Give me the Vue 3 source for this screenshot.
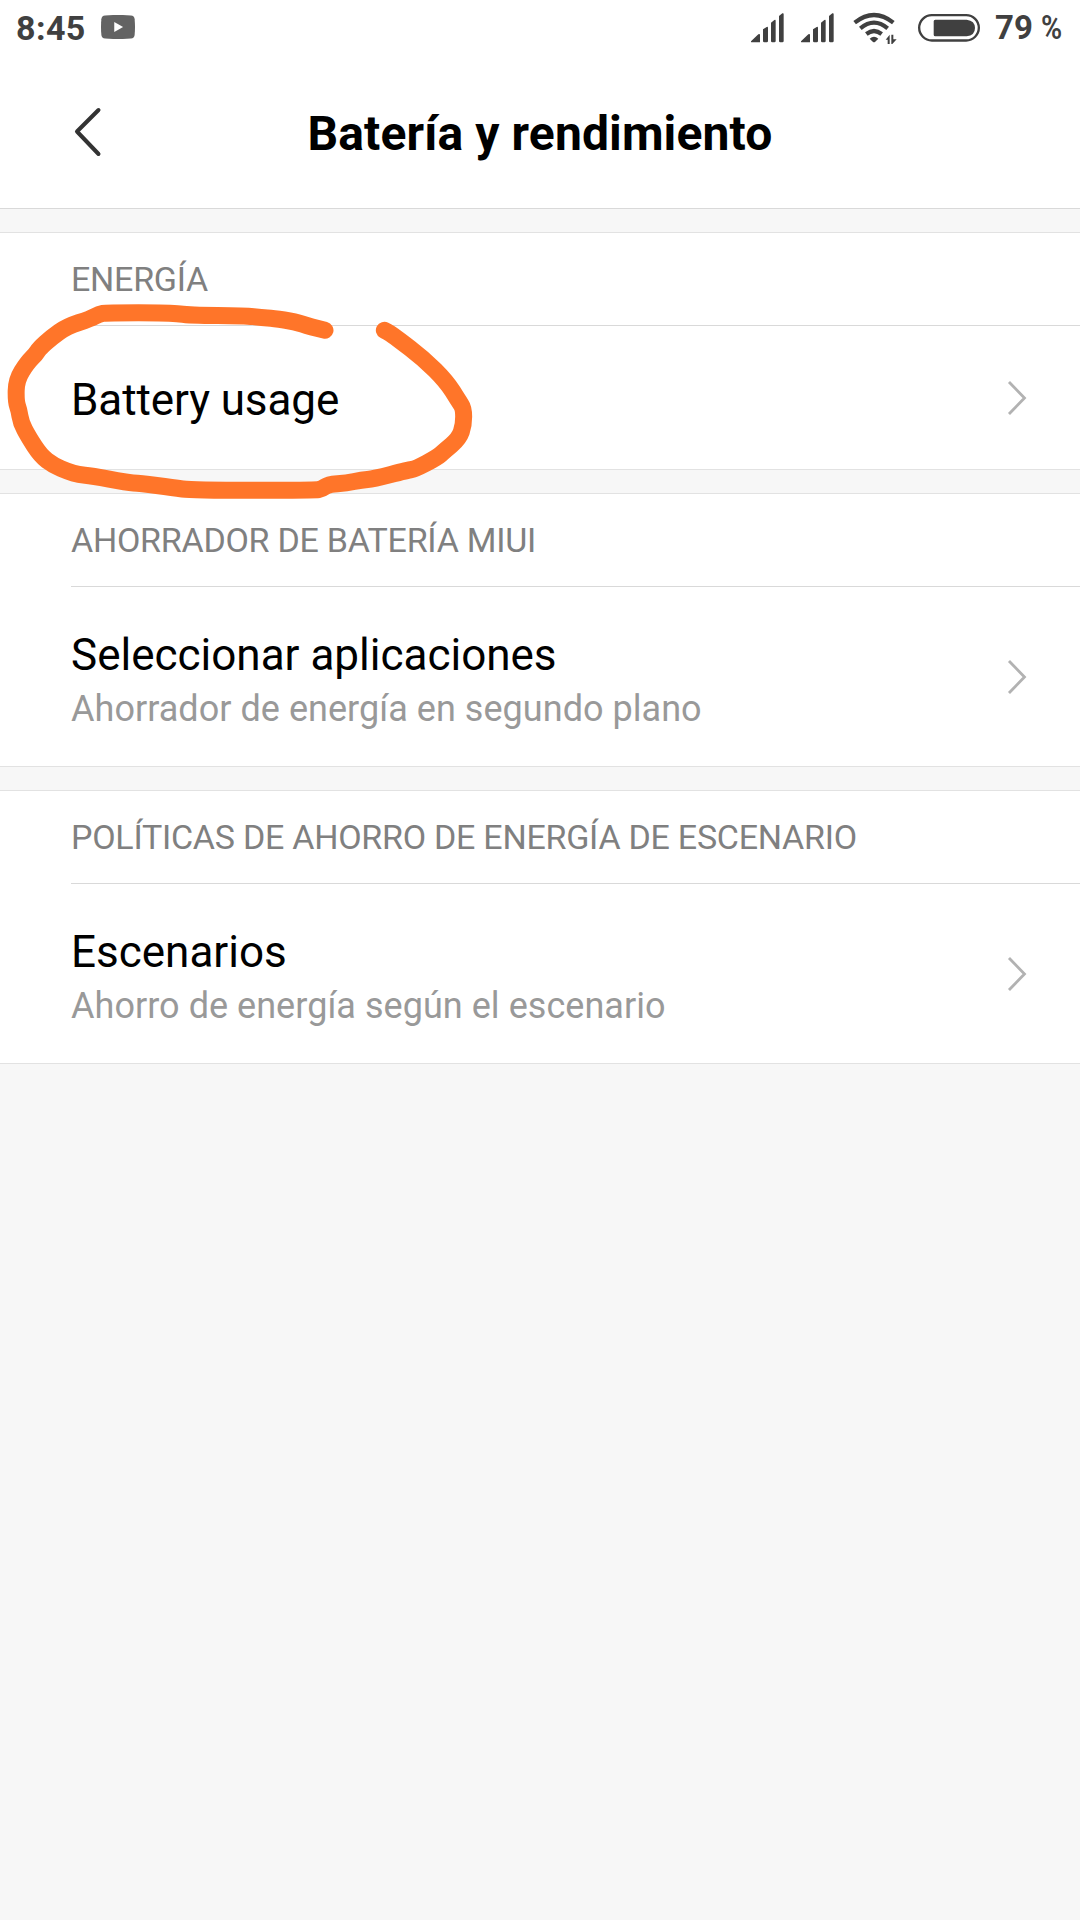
<template>
  <div class="screen">
    <header class="top">
      <div class="status-bar">
        <span class="clock">8:45</span>
        <svg class="video-icon" viewBox="0 0 100 70">
          <path class="video-body" d="M12 1Q50-2 88 1Q98 2 99 12Q101 35 99 58Q98 68 88 69Q50 72 12 69Q2 68 1 58Q-1 35 1 12Q2 2 12 1Z" />
          <path class="video-play" d="M39 20L65 35L39 50Z" />
        </svg>
        <div class="status-right">
          <svg v-for="n in 2" :key="n" class="signal-icon" viewBox="0 0 99 90">
            <path d="M0 85L22 64Q27 61 27 66V88H3Q-1 88 0 85ZM36 49L47 42Q51 40 51 45V84Q51 88 47 88H40Q36 88 36 84ZM60 29L70 21Q74 18 74 24V84Q74 88 70 88H64Q60 88 60 84ZM84 9L94 1Q98-1 98 4V84Q98 88 94 88H88Q84 88 84 84Z" />
          </svg>
          <svg class="wifi-icon" viewBox="0 0 132 99">
            <g class="wifi-arcs">
              <path d="M5 32Q63-14 121 32" />
              <path d="M22 49Q63 15 104 49" />
              <path d="M40 66Q63 48 86 66" />
            </g>
            <path d="M50 80Q63 69 76 80L66 90Q63 92 60 90Z" />
            <path d="M98 83L110 68V96H104V83ZM115 68H121V82H131L118 96H115Z" />
          </svg>
          <svg class="battery-icon" viewBox="0 0 186 84">
            <rect class="battery-shell" x="3.5" y="3.5" width="179" height="76" rx="38" />
            <path d="M52 17H146Q171 20 171 42Q171 64 146 67H52Q47 67 47 62V22Q47 17 52 17Z" />
          </svg>
          <span class="percent">79 <span class="sign">%</span></span>
        </div>
      </div>
      <div class="title-bar">
        <svg class="back-icon" viewBox="0 0 30 50">
          <path d="M25.5 3L4 24.5L25.5 47" />
        </svg>
        <h1>Batería y rendimiento</h1>
      </div>
    </header>

    <section v-for="group in groups" :key="group.label" class="group">
      <h2>{{ group.label }}</h2>
      <div class="row" :class="{ single: !group.summary }">
        <div class="row-copy">
          <strong>{{ group.title }}</strong>
          <span v-if="group.summary">{{ group.summary }}</span>
        </div>
        <svg class="chevron" viewBox="0 0 20 36">
          <path d="M2 2L17.5 18L2 34" />
        </svg>
      </div>
    </section>

    <svg class="marker" viewBox="0 0 1500 810">
      <path :d="markerPath" />
    </svg>
  </div>
</template>

<script setup>
const groups = [
  { label: 'ENERGÍA', title: 'Battery usage' },
  {
    label: 'AHORRADOR DE BATERÍA MIUI',
    title: 'Seleccionar aplicaciones',
    summary: 'Ahorrador de energía en segundo plano',
  },
  {
    label: 'POLÍTICAS DE AHORRO DE ENERGÍA DE ESCENARIO',
    title: 'Escenarios',
    summary: 'Ahorro de energía según el escenario',
  },
]

// hand-drawn stroke around the first row
const markerPoints = [
  [975, 241], [930, 230], [885, 215], [820, 205], [785, 203], [735, 197], [570, 196], [510, 188],
  [320, 188], [297, 192], [272, 206], [200, 230], [155, 262], [118, 295], [108, 312], [82, 338],
  [49, 390], [48, 455], [57, 480], [63, 518], [85, 560], [122, 617], [160, 646], [205, 665],
  [235, 674], [275, 677], [380, 698], [420, 700], [520, 713], [575, 721], [945, 721], [966, 717],
  [985, 703], [1040, 699], [1085, 690], [1120, 687], [1225, 660], [1245, 657], [1312, 622],
  [1332, 604], [1377, 566], [1391, 525], [1391, 475], [1376, 453], [1340, 395], [1270, 325],
  [1190, 264], [1170, 250], [1153, 241],
]

function smoothPath(points) {
  let d = `M${points[0].join(' ')}`
  for (let i = 1; i < points.length - 1; i++) {
    const [x, y] = points[i]
    const [nx, ny] = points[i + 1]
    d += `Q${x} ${y} ${(x + nx) / 2} ${(y + ny) / 2}`
  }
  return `${d}L${points[points.length - 1].join(' ')}`
}

const markerPath = smoothPath(markerPoints)
</script>

<style>
body{margin:0;background:#f7f7f7}
</style>

<style scoped>
.screen{position:relative;width:1080px;height:1920px;overflow:hidden;background:#f7f7f7;font-family:Roboto,"Liberation Sans",sans-serif;color:#000}
svg{display:block;flex:none}
.top{height:208px;background:#fff;border-bottom:1px solid #d9d9d9}
.status-bar{display:flex;align-items:center;height:56px;padding:0 17px 0 16px;color:#404040;fill:#404040;font-size:33px;line-height:56px;font-weight:700}
.clock{font-size:34px;letter-spacing:.4px}
.video-icon{width:34px;height:24px;margin:-2px 0 0 15px}
.video-body{fill:#636363}
.video-play{fill:#fff}
.status-right{display:flex;align-items:center;margin-left:auto}
.signal-icon{width:33px;height:30px;margin-right:17px}
.wifi-icon{width:44px;height:33px;margin-left:2px}
.wifi-arcs{fill:none;stroke:#404040;stroke-width:12.5}
.battery-icon{width:62px;height:28px;margin-left:21px}
.battery-shell{fill:none;stroke:#404040;stroke-width:7}
.percent{width:68px;margin-left:15px;white-space:nowrap}
.sign{display:inline-block;font-weight:600;transform:scaleX(.87);transform-origin:left center}
.title-bar{position:relative;display:flex;align-items:center;justify-content:center;height:152px}
.back-icon{position:absolute;left:73px;top:51px;width:30px;height:50px;fill:none;stroke:#333;stroke-width:4;stroke-linecap:round;stroke-linejoin:round}
h1{margin:0;padding-top:4px;font-size:48px;line-height:56px;font-weight:700;letter-spacing:.12px}
.group{margin-top:23px;background:#fff;border-top:1px solid #e2e2e2;border-bottom:1px solid #e2e2e2}
h2{height:92px;margin:0 0 0 71px;border-bottom:1px solid #d9d9d9;font-size:34px;line-height:92px;font-weight:400;letter-spacing:-.25px;color:#808080;white-space:nowrap}
.row{display:flex;align-items:center;justify-content:space-between;height:179px;padding:0 53px 0 71px}
.row.single{height:143px}
.row-copy{display:flex;flex-direction:column;padding-top:9px}
.row.single .row-copy{padding-top:5px}
.row-copy strong{font-size:44px;line-height:56px;font-weight:400}
.row.single strong{letter-spacing:-.1px}
.row-copy span{font-size:36px;line-height:52px;letter-spacing:.04px;color:#999}
.chevron{width:20px;height:36px;fill:none;stroke:#b2b2b2;stroke-width:2.8}
.marker{position:absolute;left:0;top:250px;width:500px;height:270px;fill:none;stroke:#ff7529;stroke-width:51;stroke-linecap:round;stroke-linejoin:round;pointer-events:none}
</style>
